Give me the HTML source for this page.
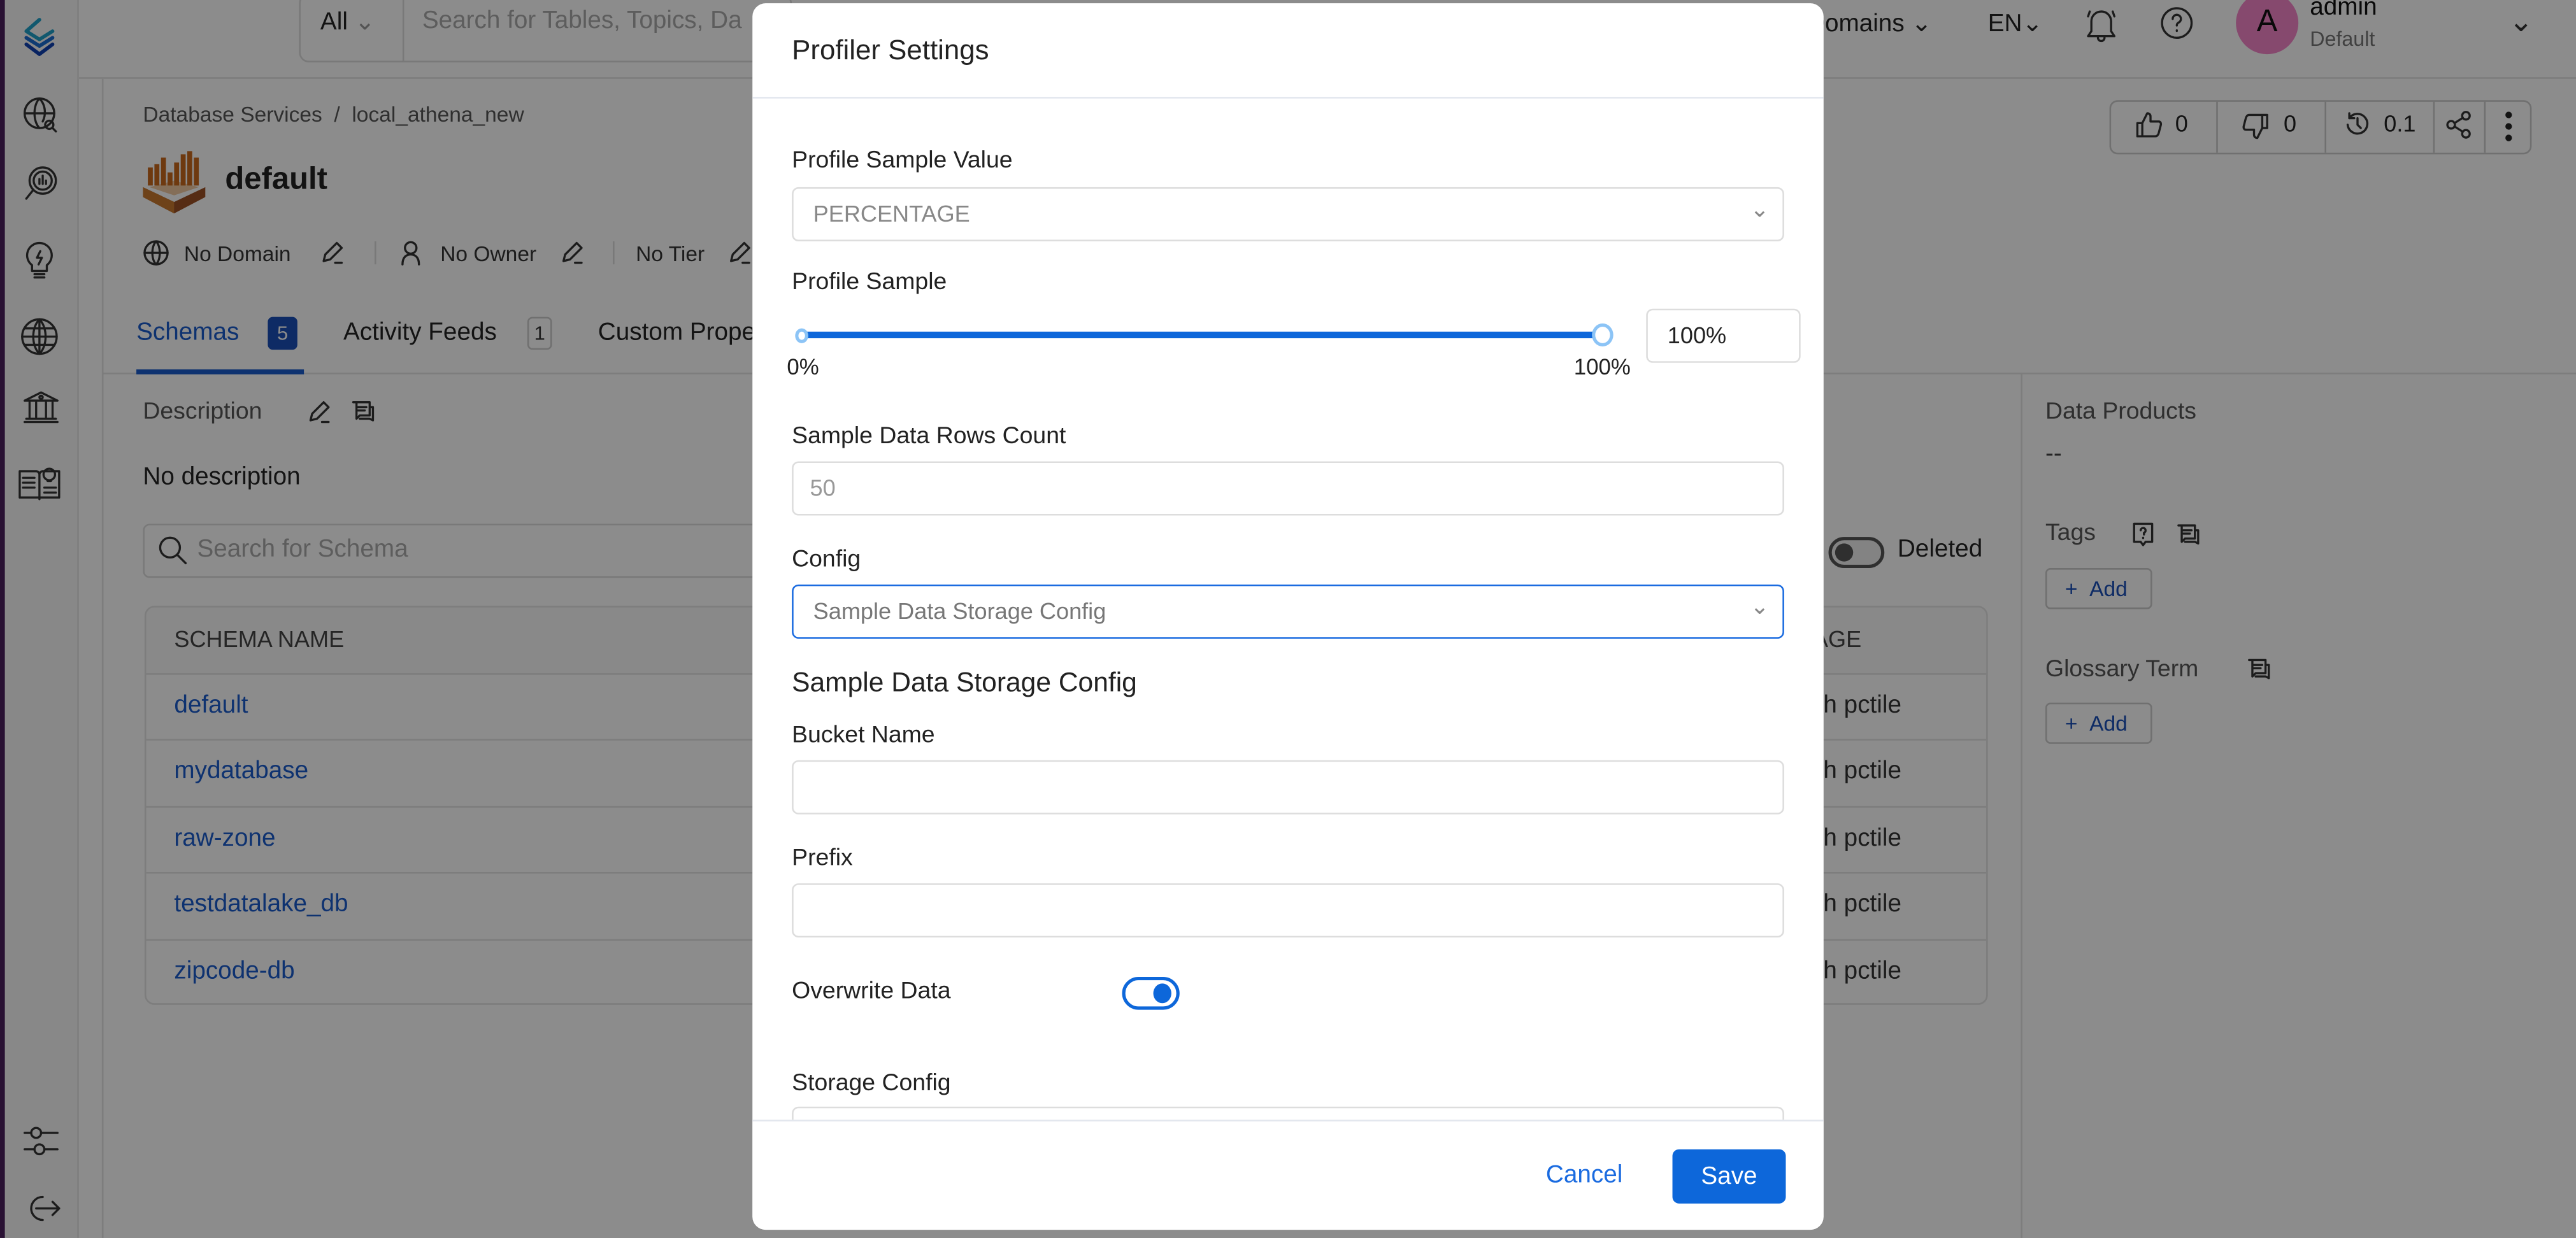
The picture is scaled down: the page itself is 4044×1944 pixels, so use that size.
<!DOCTYPE html>
<html><head><meta charset="utf-8">
<style>
*{box-sizing:border-box;margin:0;padding:0}
html,body{width:4044px;height:1944px;overflow:hidden;background:#8c8c8c}
#w{position:absolute;left:0;top:0;width:1568px;height:754px;transform:scale(2.5791,2.5782);transform-origin:0 0;font-family:"Liberation Sans",sans-serif;color:#222}
#pg{position:absolute;left:0;top:0;width:1568px;height:754px;background:#8c8c8c;color:#131313}
.a{position:absolute;white-space:nowrap}
.ic{position:absolute;fill:none;stroke:#1c1c1c;stroke-width:1.3;stroke-linecap:round;stroke-linejoin:round}
.lab{font-size:14.5px;color:#222}
.inp{position:absolute;left:24px;width:604px;height:33px;border:1px solid #ddd;border-radius:4px;background:#fff}
.row{position:absolute;left:0;width:1122px;height:40px;border-top:1px solid #7d7d7d}
.row span{position:absolute;left:17px;top:10px;font-size:15px;color:#0e3270}
.row b{position:absolute;left:1000px;top:10px;font-size:15px;font-weight:normal;color:#1c1c1c}
.h{font-size:14.5px;color:#2f2f2f}
.bd{background:#7d7d7d}
</style></head><body>
<div id="w">
<div id="pg">
<div class="a" style="left:0;top:0;width:3px;height:754px;background:#291133"></div>
<div class="a" style="left:3px;top:0;width:45px;height:754px;background:#888;border-right:1px solid #7f7f7f"></div>
<div class="a bd" style="left:48px;top:47px;width:1520px;height:1px"></div>
<div class="a bd" style="left:62px;top:48px;width:1px;height:706px"></div>
<svg class="ic" style="left:13px;top:10px" width="22" height="26" viewBox="0 0 22 26"><path d="M11 2 L3 9 L11 14 L19 9" stroke="#11586e" stroke-width="2.2"/><path d="M3 13 L11 18 L19 13" stroke="#0e3b72" stroke-width="2.2"/><path d="M3 17 L11 23 L19 17" stroke="#082361" stroke-width="2.2"/></svg>
<svg class="ic" style="left:13px;top:58px" width="24" height="24" viewBox="0 0 24 24"><circle cx="11" cy="11" r="9"/><path d="M2 11h18M11 2c-4 4-4 14 0 18M11 2c4 4 4 10 2 14"/><circle cx="17" cy="18" r="2.5"/><path d="M19 20l2 2"/></svg>
<svg class="ic" style="left:13px;top:100px" width="24" height="24" viewBox="0 0 24 24"><circle cx="13" cy="10" r="8"/><circle cx="13" cy="10" r="5.5"/><path d="M7 16l-4 5M11 12v-3M13 12v-5M15 12v-2"/></svg>
<svg class="ic" style="left:14px;top:146px" width="20" height="26" viewBox="0 0 20 26"><path d="M10 2a7.5 7.5 0 0 0-4.5 13.5V19h9v-3.5A7.5 7.5 0 0 0 10 2z"/><path d="M7 21h6M7 23h6M10.5 7l-2 4h3l-2 4"/></svg>
<svg class="ic" style="left:12px;top:193px" width="24" height="24" viewBox="0 0 24 24"><circle cx="12" cy="12" r="10.5"/><path d="M1.5 12h21M12 1.5v21M3 7h18M3 17h18M12 1.5c-5 5-5 16 0 21M12 1.5c5 5 5 16 0 21"/></svg>
<svg class="ic" style="left:13px;top:236px" width="24" height="24" viewBox="0 0 24 24"><path d="M2 8L12 3l10 5zM3 8h18M5 9v9M9 9v9M15 9v9M19 9v9M3 19h18M2 21h20"/><circle cx="12" cy="6" r="1"/></svg>
<svg class="ic" style="left:10px;top:282px" width="28" height="24" viewBox="0 0 28 24"><path d="M2 5h10c1 0 2 1 2 2v15M26 5H16c-1 0-2 1-2 2M2 5v16h12M26 5v16H14M4 9h7M4 12h7M4 15h7M17 15h7M17 18h7"/><circle cx="20" cy="7" r="3.5"/><path d="M19 11h2"/></svg>
<svg class="ic" style="left:13px;top:684px" width="24" height="24" viewBox="0 0 24 24"><path d="M2 6h4M12 6h10M2 16h6M14 16h8"/><circle cx="9" cy="6" r="3"/><circle cx="11" cy="16" r="3"/></svg>
<svg class="ic" style="left:14px;top:726px" width="24" height="20" viewBox="0 0 24 20"><path d="M12 3a7 7 0 1 0 0 14M8 10h14M18 6l4 4-4 4"/></svg>
<div class="a" style="left:182px;top:-4px;width:300px;height:42px;border:1px solid #797979;border-radius:6px;background:#8c8c8c"></div>
<div class="a" style="left:245px;top:0;width:1px;height:38px;background:#797979"></div>
<div class="a" style="left:195px;top:4px;font-size:15px;color:#131313">All <span style="color:#545454">&#8964;</span></div>
<div class="a" style="left:257px;top:4px;font-size:15px;color:#5d5d5d">Search for Tables, Topics, Da</div>
<div class="a" style="left:1100px;top:5px;font-size:15px;color:#131313">Domains &#8964;</div>
<div class="a" style="left:1210px;top:5px;font-size:15px;color:#131313">EN&#8964;</div>
<svg class="ic" style="left:1268px;top:3px" width="22" height="24" viewBox="0 0 22 24"><path d="M11 4a6 6 0 0 0-6 6v6l-2 3h16l-2-3v-6a6 6 0 0 0-6-6zM9 20a2 2 0 0 0 4 0M4 4l-1 3M18 4l1 3"/></svg>
<svg class="ic" style="left:1314px;top:3px" width="22" height="22" viewBox="0 0 22 22"><circle cx="11" cy="11" r="9"/><path d="M8.5 8.5a2.5 2.5 0 1 1 3.5 2.3c-.7.4-1 1-1 1.7M11 15.5v.3"/></svg>
<div class="a" style="left:1361px;top:-5px;width:38px;height:38px;border-radius:50%;background:#86496e;text-align:center;line-height:38px;font-size:19px;color:#090909">A</div>
<div class="a" style="left:1406px;top:-4px;font-size:15px;color:#090909">admin</div>
<div class="a" style="left:1406px;top:17px;font-size:12.5px;color:#414141">Default</div>
<div class="a" style="left:1527px;top:3px;font-size:18px;color:#1c1c1c">&#8964;</div>
<div class="a" style="left:87px;top:62px;font-size:13px;color:#2f2f2f">Database Services&nbsp; /&nbsp; local_athena_new</div>
<svg style="position:absolute;left:87px;top:92px" width="38" height="38" viewBox="0 0 38 38"><path d="M0 22l19 9 19-9v6l-19 10L0 28z" fill="#562c14"/><path d="M0 22l19 9v7L0 28z" fill="#6e4219"/><path d="M4 22l15-4 15 4-15 5z" fill="#846e58"/><g fill="#6e390f"><rect x="3" y="10" width="3" height="11"/><rect x="7" y="8" width="3" height="13"/><rect x="11" y="4" width="3" height="17"/><rect x="15" y="13" width="3" height="8"/><rect x="19" y="7" width="3" height="14"/><rect x="23" y="2" width="3" height="19"/><rect x="27" y="0" width="3" height="21"/><rect x="31" y="4" width="3" height="17"/></g></svg>
<div class="a" style="left:137px;top:99px;font-size:19px;font-weight:bold;color:#131313">default</div>
<svg class="ic" style="left:87px;top:146px" width="16" height="16" viewBox="0 0 16 16"><circle cx="8" cy="8" r="7"/><path d="M1 8h14M8 1c-3 3-3 11 0 14M8 1c3 3 3 11 0 14"/></svg>
<div class="a" style="left:112px;top:147px;font-size:13px;color:#1c1c1c">No Domain</div>
<svg class="ic" style="left:194px;top:146px" width="16" height="16" viewBox="0 0 16 16"><path d="M3 13l1-4 7-7 3 3-7 7zM10 14h4"/></svg>
<div class="a" style="left:228px;top:147px;width:1px;height:14px;background:#797979"></div>
<svg class="ic" style="left:242px;top:146px" width="16" height="16" viewBox="0 0 16 16"><circle cx="8" cy="5" r="3.5"/><path d="M3 15c0-4 2-6 5-6s5 2 5 6"/></svg>
<div class="a" style="left:268px;top:147px;font-size:13px;color:#1c1c1c">No Owner</div>
<svg class="ic" style="left:340px;top:146px" width="16" height="16" viewBox="0 0 16 16"><path d="M3 13l1-4 7-7 3 3-7 7zM10 14h4"/></svg>
<div class="a" style="left:373px;top:147px;width:1px;height:14px;background:#797979"></div>
<div class="a" style="left:387px;top:147px;font-size:13px;color:#1c1c1c">No Tier</div>
<svg class="ic" style="left:442px;top:146px" width="16" height="16" viewBox="0 0 16 16"><path d="M3 13l1-4 7-7 3 3-7 7zM10 14h4"/></svg>
<div class="a" style="left:83px;top:194px;font-size:15px;color:#0e3270">Schemas</div>
<div class="a" style="left:163px;top:193px;width:18px;height:20px;border-radius:3px;background:#0e2b65;color:#8c8c8c;font-size:12px;text-align:center;line-height:20px">5</div>
<div class="a" style="left:209px;top:194px;font-size:15px;color:#131313">Activity Feeds</div>
<div class="a" style="left:321px;top:193px;width:15px;height:20px;border-radius:3px;border:1px solid #707070;color:#1c1c1c;font-size:12px;text-align:center;line-height:18px">1</div>
<div class="a" style="left:364px;top:194px;font-size:15px;color:#131313">Custom Properties</div>
<div class="a bd" style="left:63px;top:227px;width:1505px;height:1px"></div>
<div class="a" style="left:83px;top:225px;width:102px;height:3px;background:#0e3270"></div>
<div class="a bd" style="left:1230px;top:228px;width:1px;height:526px"></div>
<div class="a h" style="left:87px;top:243px">Description</div>
<svg class="ic" style="left:186px;top:243px" width="16" height="16" viewBox="0 0 16 16"><path d="M3 13l1-4 7-7 3 3-7 7zM10 14h4"/></svg>
<svg class="ic" style="left:213px;top:243px" width="16" height="16" viewBox="0 0 16 16"><path d="M2 2h10v8H6l-2 2V2zM5 5h5M5 7h4M13 5h1v8l-2-1H6"/></svg>
<div class="a" style="left:87px;top:282px;font-size:15px;color:#131313">No description</div>
<div class="a" style="left:87px;top:319px;width:400px;height:33px;border:1px solid #797979;border-radius:4px"></div>
<svg class="ic" style="left:96px;top:326px" width="18" height="18" viewBox="0 0 18 18" stroke="#545454"><circle cx="7.5" cy="7.5" r="6"/><path d="M12 12l5 5"/></svg>
<div class="a" style="left:120px;top:326px;font-size:15px;color:#5d5d5d">Search for Schema</div>
<div class="a" style="left:1113px;top:327px;width:34px;height:19px;border-radius:10px;border:2px solid #2f2f2f;background:#838383"></div>
<div class="a" style="left:1117px;top:331px;width:11px;height:11px;border-radius:50%;background:#2f2f2f"></div>
<div class="a" style="left:1155px;top:326px;font-size:15px;color:#131313">Deleted</div>
<div class="a" style="left:88px;top:369px;width:1122px;height:243px;border:1px solid #7d7d7d;border-radius:6px;overflow:hidden">
 <div class="a" style="left:0;top:0;width:1122px;height:40px;background:#898989"></div>
 <div class="a" style="left:17px;top:11px;font-size:14px;color:#252525">SCHEMA NAME</div>
 <div class="a" style="left:995px;top:11px;font-size:14px;color:#252525">USAGE</div>
 <div class="row" style="top:40px"><span>default</span><b>50th pctile</b></div>
 <div class="row" style="top:80px"><span>mydatabase</span><b>50th pctile</b></div>
 <div class="row" style="top:121px"><span>raw-zone</span><b>50th pctile</b></div>
 <div class="row" style="top:161px"><span>testdatalake_db</span><b>50th pctile</b></div>
 <div class="row" style="top:202px"><span>zipcode-db</span><b>50th pctile</b></div>
</div>
<div class="a h" style="left:1245px;top:243px">Data Products</div>
<div class="a" style="left:1245px;top:268px;font-size:15px;color:#252525">--</div>
<div class="a h" style="left:1245px;top:317px">Tags</div>
<svg class="ic" style="left:1297px;top:318px" width="15" height="16" viewBox="0 0 15 16"><path d="M2 1h11v11H9l-1.5 2L6 12H2z"/><path d="M6 5a1.5 1.5 0 1 1 2 1.5v1M7.5 9.5v.2"/></svg>
<svg class="ic" style="left:1324px;top:318px" width="16" height="16" viewBox="0 0 16 16"><path d="M2 2h10v8H6l-2 2V2zM5 5h5M5 7h4M13 5h1v8l-2-1H6"/></svg>
<div class="a" style="left:1245px;top:346px;width:65px;height:25px;border:1px solid #707070;border-radius:3px;font-size:13px;color:#0e2b65;line-height:23px;padding-left:11px">+ &nbsp;Add</div>
<div class="a h" style="left:1245px;top:400px">Glossary Term</div>
<svg class="ic" style="left:1367px;top:400px" width="16" height="16" viewBox="0 0 16 16"><path d="M2 2h10v8H6l-2 2V2zM5 5h5M5 7h4M13 5h1v8l-2-1H6"/></svg>
<div class="a" style="left:1245px;top:428px;width:65px;height:25px;border:1px solid #707070;border-radius:3px;font-size:13px;color:#0e2b65;line-height:23px;padding-left:11px">+ &nbsp;Add</div>
<div class="a" style="left:1284px;top:61px;width:257px;height:33px;border:1px solid #707070;border-radius:5px;background:#8c8c8c"></div>
<div class="a" style="left:1349px;top:62px;width:1px;height:31px;background:#707070"></div>
<div class="a" style="left:1415px;top:62px;width:1px;height:31px;background:#707070"></div>
<div class="a" style="left:1481px;top:62px;width:1px;height:31px;background:#707070"></div>
<div class="a" style="left:1512px;top:62px;width:1px;height:31px;background:#707070"></div>
<svg class="ic" style="left:1299px;top:67px" width="18" height="18" viewBox="0 0 18 18"><path d="M2 8h3v8H2zM5 8l3-6c1.5 0 2 1 2 2v3h5c1 0 1.5 1 1.3 2l-1.3 5c-.2 1-1 2-2 2H5"/></svg>
<div class="a" style="left:1324px;top:67px;font-size:14px;color:#131313">0</div>
<svg class="ic" style="left:1364px;top:68px" width="18" height="18" viewBox="0 0 18 18"><path d="M13 2h3v8h-3zM13 10l-3 6c-1.5 0-2-1-2-2v-3H3c-1 0-1.5-1-1.3-2L3 4c.2-1 1-2 2-2h8"/></svg>
<div class="a" style="left:1390px;top:67px;font-size:14px;color:#131313">0</div>
<svg class="ic" style="left:1427px;top:68px" width="16" height="16" viewBox="0 0 16 16"><path d="M3 4a6 6 0 1 1-1 4M3 1v3h3M8 4v4l2 2"/></svg>
<div class="a" style="left:1451px;top:67px;font-size:14px;color:#131313">0.1</div>
<svg class="ic" style="left:1488px;top:67px" width="18" height="18" viewBox="0 0 18 18"><circle cx="13" cy="3.5" r="2.3"/><circle cx="4" cy="9" r="2.3"/><circle cx="13" cy="14.5" r="2.3"/><path d="M6 8l5-3.2M6 10l5 3.2"/></svg>
<div class="a" style="left:1525px;top:68px;width:4px;height:4px;border-radius:50%;background:#131313"></div>
<div class="a" style="left:1525px;top:75px;width:4px;height:4px;border-radius:50%;background:#131313"></div>
<div class="a" style="left:1525px;top:82px;width:4px;height:4px;border-radius:50%;background:#131313"></div>
</div>
<!-- modal -->
<div class="a" style="left:458px;top:2px;width:652px;height:747px;background:#fff;border-radius:8px;overflow:hidden;z-index:60">
 <div class="a" style="left:24px;top:19px;font-size:17px;color:#222">Profiler Settings</div>
 <div class="a" style="left:0;top:57px;width:652px;height:1px;background:#e3e7ee"></div>
 <div class="a lab" style="left:24px;top:88px">Profile Sample Value</div>
 <div class="inp" style="top:112px"><span class="a" style="left:12px;top:7px;font-size:14px;color:#888">PERCENTAGE</span><span class="a" style="right:8px;top:4px;font-size:14px;color:#888">&#8964;</span></div>
 <div class="a lab" style="left:24px;top:162px">Profile Sample</div>
 <div class="a" style="left:30px;top:200px;width:488px;height:4px;background:#0d67da;border-radius:2px"></div>
 <div class="a" style="left:26px;top:198px;width:8px;height:9px;border-radius:50%;border:2px solid #8cc4f6;background:#fff"></div>
 <div class="a" style="left:511px;top:195px;width:13px;height:14px;border-radius:50%;border:2px solid #8cc4f6;background:#fff"></div>
 <div class="a" style="left:21px;top:214px;font-size:13.5px;color:#222">0%</div>
 <div class="a" style="left:500px;top:214px;font-size:13.5px;color:#222">100%</div>
 <div class="a" style="left:544px;top:186px;width:94px;height:33px;border:1px solid #ddd;border-radius:4px"><span class="a" style="left:12px;top:7px;font-size:14px;color:#222">100%</span></div>
 <div class="a lab" style="left:24px;top:256px">Sample Data Rows Count</div>
 <div class="inp" style="top:279px"><span class="a" style="left:10px;top:7px;font-size:14px;color:#999">50</span></div>
 <div class="a lab" style="left:24px;top:331px">Config</div>
 <div class="inp" style="top:354px;border-color:#1a6be0"><span class="a" style="left:12px;top:7px;font-size:14px;color:#777">Sample Data Storage Config</span><span class="a" style="right:8px;top:4px;font-size:14px;color:#888">&#8964;</span></div>
 <div class="a" style="left:24px;top:405px;font-size:16.5px;color:#222">Sample Data Storage Config</div>
 <div class="a lab" style="left:24px;top:438px">Bucket Name</div>
 <div class="inp" style="top:461px"></div>
 <div class="a lab" style="left:24px;top:513px">Prefix</div>
 <div class="inp" style="top:536px"></div>
 <div class="a lab" style="left:24px;top:594px">Overwrite Data</div>
 <div class="a" style="left:225px;top:593px;width:35px;height:20px;border-radius:10px;border:2px solid #0d67da;background:#fff"></div>
 <div class="a" style="left:244px;top:597px;width:11px;height:12px;border-radius:50%;background:#0d67da"></div>
 <div class="a lab" style="left:24px;top:650px">Storage Config</div>
 <div class="inp" style="top:672px;height:40px"></div>
 <div class="a" style="left:0;top:680px;width:652px;height:67px;background:#fff;border-top:1px solid #e3e7ee"></div>
 <div class="a" style="left:483px;top:705px;font-size:15px;color:#1a6be0">Cancel</div>
 <div class="a" style="left:560px;top:698px;width:69px;height:33px;border-radius:4px;background:#0d67da;color:#fff;font-size:15px;text-align:center;line-height:33px">Save</div>
</div>
</div>
</body></html>
